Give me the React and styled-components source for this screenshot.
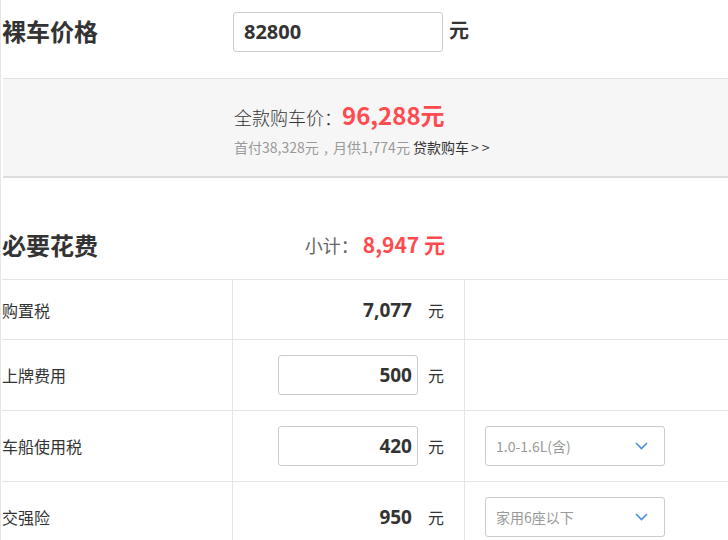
import styled, { createGlobalStyle } from "styled-components";

const GlobalStyle = createGlobalStyle`
  body {
    margin: 0;
    background: #fff;
    font-family: "Open Sans", "Noto Sans CJK SC", sans-serif;
    color: #333;
  }
`;

const Page = styled.div`
  width: 728px;
  min-height: 540px;
  border-left: 1px solid #e6e6e6;
  padding-left: 1px;
  box-sizing: border-box;
  overflow: hidden;
`;

const PriceRow = styled.div`
  display: flex;
  align-items: flex-start;
  height: 78px;
  padding-top: 12px;
  box-sizing: border-box;
`;

const SectionTitle = styled.h2`
  margin: 0;
  width: 231px;
  font-size: 24px;
  line-height: ${(p) => p.$lh || 40}px;
  font-weight: 700;
  color: #333;
  font-family: "Noto Sans CJK SC", sans-serif;
`;

const PriceInput = styled.div`
  width: 210px;
  height: 40px;
  box-sizing: border-box;
  border: 1px solid #ccc;
  border-radius: 3px;
  padding-left: 10px;
  font-size: 20px;
  font-weight: 700;
  line-height: 38px;
  color: #333;
`;

const Unit = styled.span`
  margin-left: ${(p) => p.$gap || 10}px;
  font-size: ${(p) => (p.$big ? 20 : 16)}px;
  font-weight: ${(p) => (p.$big ? 700 : 400)};
  line-height: ${(p) => (p.$big ? 36 : 40)}px;
  font-family: "Noto Sans CJK SC", sans-serif;
  color: #333;
`;

const Summary = styled.div`
  margin-left: 1px;
  height: 100px;
  box-sizing: border-box;
  background: #f6f6f6;
  border-top: 1px solid #e3e3e3;
  border-bottom: 2px solid #dddddd;
  padding: 18px 0 0 231px;
`;

const TotalLine = styled.div`
  display: flex;
  align-items: baseline;
  font-size: 18px;
  font-weight: 300;
  color: #333;
  font-family: "Noto Sans CJK SC", sans-serif;
  height: 32px;
`;

const Red = styled.span`
  color: #ff4a4f;
  font-weight: 700;
  font-size: ${(p) => p.$size}px;
  font-family: "Noto Sans CJK SC", sans-serif;
`;

const LoanLine = styled.div`
  margin-top: 8px;
  font-size: 14px;
  color: #999;
  font-family: "Noto Sans CJK SC", sans-serif;
  white-space: pre;
  word-spacing: 2px;

  a {
    color: #333;
    text-decoration: none;
    margin-left: 3px;
  }
`;

const Arrows = styled.span`
  margin-left: 2px;
  letter-spacing: 3px;
`;

const FeeHeader = styled.div`
  display: grid;
  grid-template-columns: 231px 232px;
  align-items: end;
  height: 101px;
  padding-bottom: 14px;
  box-sizing: border-box;
`;

const Subtotal = styled.div`
  text-align: right;
  padding-right: 20px;
  font-size: 18px;
  color: #666;
  font-family: "Noto Sans CJK SC", sans-serif;
  line-height: 40px;
  white-space: pre;
`;

const Table = styled.div`
  border-top: 1px solid #e5e5e5;
`;

const Row = styled.div`
  display: grid;
  grid-template-columns: 231px 232px 1fr;
  height: ${(p) => p.$h}px;
  box-sizing: border-box;
  border-bottom: 1px solid #e5e5e5;
`;

const Cell = styled.div`
  display: flex;
  align-items: center;
  justify-content: ${(p) => (p.$end ? "flex-end" : "flex-start")};
  padding-right: ${(p) => (p.$end ? 20 : 0)}px;
  padding-left: ${(p) => p.$pl || 0}px;
  border-right: ${(p) => (p.$line ? "1px solid #e5e5e5" : "none")};
`;

const Label = styled.span`
  font-size: 16px;
  color: #333;
  font-family: "Noto Sans CJK SC", sans-serif;
`;

const Amount = styled.div`
  width: 140px;
  height: 40px;
  box-sizing: border-box;
  border: 1px solid ${(p) => (p.$boxed ? "#ccc" : "transparent")};
  border-radius: 3px;
  padding-right: 5px;
  text-align: right;
  font-size: 19px;
  font-weight: 700;
  line-height: 38px;
  color: #333;
`;

const Select = styled.div`
  width: 180px;
  height: 40px;
  box-sizing: border-box;
  border: 1px solid #ccc;
  border-radius: 3px;
  display: flex;
  align-items: center;
  justify-content: space-between;
  padding: 0 16px 0 10px;
  font-size: 14px;
  color: #999;
  font-family: "Noto Sans CJK SC", sans-serif;
`;

const Chevron = () => (
  <svg width="13" height="8" viewBox="0 0 13 8">
    <path d="M1 1l5.5 5.5L12 1" fill="none" stroke="#4a8fe0" strokeWidth="1.6" />
  </svg>
);

const fees = [
  { label: "购置税", value: "7,077", h: 60 },
  { label: "上牌费用", value: "500", boxed: true, h: 71 },
  { label: "车船使用税", value: "420", boxed: true, select: "1.0-1.6L(含)", h: 71 },
  { label: "交强险", value: "950", select: "家用6座以下", h: 71 },
];

export default function App() {
  return (
    <Page>
      <GlobalStyle />
      <PriceRow>
        <SectionTitle $lh={38}>裸车价格</SectionTitle>
        <PriceInput>82800</PriceInput>
        <Unit $big $gap={6}>元</Unit>
      </PriceRow>
      <Summary>
        <TotalLine>
          全款购车价：<Red $size={24}>96,288元</Red>
        </TotalLine>
        <LoanLine>
          首付38,328元 , 月供1,774元<a href="#">贷款购车<Arrows>&gt;&gt;</Arrows></a>
        </LoanLine>
      </Summary>
      <FeeHeader>
        <SectionTitle>必要花费</SectionTitle>
        <Subtotal>
          小计： <Red $size={21}>8,947 元</Red>
        </Subtotal>
      </FeeHeader>
      <Table>
        {fees.map((f) => (
          <Row key={f.label} $h={f.h}>
            <Cell $line>
              <Label>{f.label}</Label>
            </Cell>
            <Cell $line $end>
              <Amount $boxed={f.boxed}>{f.value}</Amount>
              <Unit>元</Unit>
            </Cell>
            <Cell $pl={20}>{f.select && <Select>{f.select}<Chevron /></Select>}</Cell>
          </Row>
        ))}
      </Table>
    </Page>
  );
}
